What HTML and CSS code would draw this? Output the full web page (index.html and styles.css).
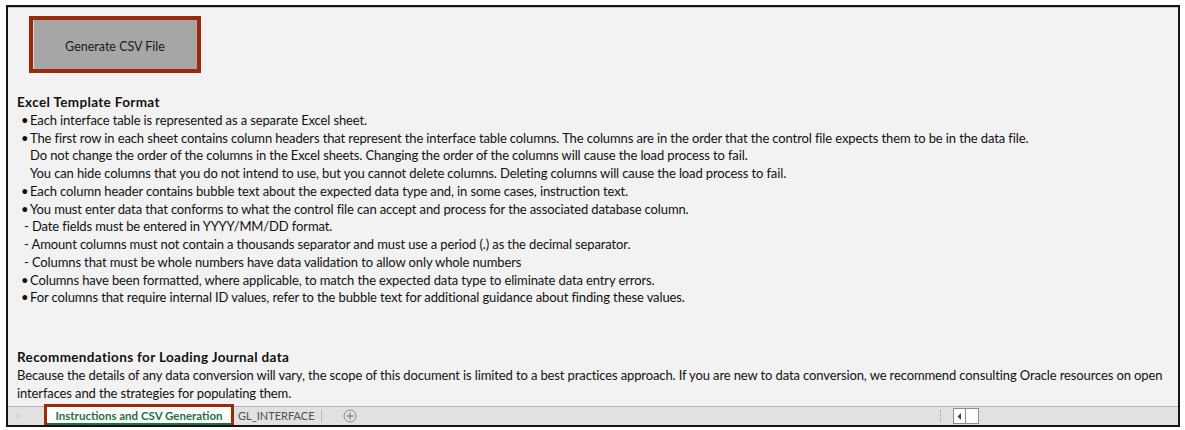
FILE: index.html
```html
<!DOCTYPE html>
<html>
<head>
<meta charset="utf-8">
<link rel="stylesheet" href="styles.css">
</head>
<body>
<div class="sheet">
  <div class="content">
    <div class="btn-wrap"><div class="btn">Generate CSV File</div></div>
    <div class="text">
      <div class="line bold">Excel Template Format</div>
      <div class="line blt"><span class="dot">•</span>Each interface table is represented as a separate Excel sheet.</div>
      <div class="line blt"><span class="dot">•</span>The first row in each sheet contains column headers that represent the interface table columns. The columns are in the order that the control file expects them to be in the data file.</div>
      <div class="line ind">Do not change the order of the columns in the Excel sheets. Changing the order of the columns will cause the load process to fail.</div>
      <div class="line ind">You can hide columns that you do not intend to use, but you cannot delete columns. Deleting columns will cause the load process to fail.</div>
      <div class="line blt"><span class="dot">•</span>Each column header contains bubble text about the expected data type and, in some cases, instruction text.</div>
      <div class="line blt"><span class="dot">•</span>You must enter data that conforms to what the control file can accept and process for the associated database column.</div>
      <div class="line dash">- Date fields must be entered in YYYY/MM/DD format.</div>
      <div class="line dash">- Amount columns must not contain a thousands separator and must use a period (.) as the decimal separator.</div>
      <div class="line dash">- Columns that must be whole numbers have data validation to allow only whole numbers</div>
      <div class="line blt"><span class="dot">•</span>Columns have been formatted, where applicable, to match the expected data type to eliminate data entry errors.</div>
      <div class="line blt"><span class="dot">•</span>For columns that require internal ID values, refer to the bubble text for additional guidance about finding these values.</div>
      <div class="gap"></div>
      <div class="line bold">Recommendations for Loading Journal data</div>
      <div class="line">Because the details of any data conversion will vary, the scope of this document is limited to a best practices approach. If you are new to data conversion, we recommend consulting Oracle resources on open</div>
      <div class="line">interfaces and the strategies for populating them.</div>
    </div>
  </div>
  <div class="tabbar">
    <div class="nav-arrow">
      <svg width="6" height="8" viewBox="0 0 6 8"><path d="M1 0.5 L5 4 L1 7.5 Z" fill="#cfcfcf"/></svg>
    </div>
    <div class="tab active">Instructions and CSV Generation</div>
    <div class="tab">GL_INTERFACE</div>
    <div class="sep"></div>
    <div class="add">
      <svg width="14" height="14" viewBox="0 0 14 14"><circle cx="7" cy="7" r="6" fill="none" stroke="#8a8a8a" stroke-width="1"/><path d="M7 3.5 V10.5 M3.5 7 H10.5" stroke="#6f6f6f" stroke-width="1"/></svg>
    </div>
    <div class="spacer"></div>
    <div class="dots"></div>
    <div class="scroll">
      <div class="scroll-left"><svg width="5" height="7" viewBox="0 0 5 7"><path d="M4 0 L0.5 3.5 L4 7 Z" fill="#444"/></svg></div>
      <div class="scroll-thumb"></div>
    </div>
  </div>
</div>
</body>
</html>
```
FILE: styles.css
```css
html, body {
  margin: 0;
  padding: 0;
  background: #ffffff;
}

.sheet {
  margin: 5px 0 0 6px;
  width: 1170px;
  height: 418px;
  border: 2px solid #141414;
  background: #f2f2f2;
  display: flex;
  flex-direction: column;
  overflow: hidden;
}

.content {
  flex: 1;
  border-top: 1px solid #c4c4c4;
  overflow: hidden;
  font-family: Lato, "Liberation Sans", sans-serif;
  font-size: 13px;
  letter-spacing: -0.12px;
  color: #111111;
}

.btn-wrap {
  padding: 8px 0 0 21px;
}

.btn {
  width: 164px;
  height: 46px;
  padding-top: 3px;
  border: 4px solid #9a2a0c;
  background: #a6a6a6;
  box-shadow: inset 1px 0 0 #d6d6d6;
  display: flex;
  align-items: center;
  justify-content: center;
  font-size: 12.5px;
  letter-spacing: 0;
  color: #1a1a1a;
}

.text {
  padding: 21px 0 0 9px;
}

.line {
  height: 17.75px;
  line-height: 17.75px;
  white-space: nowrap;
}

.bold {
  font-weight: 700;
  font-size: 13.5px;
  letter-spacing: 0.35px;
}

.blt {
  padding-left: 4px;
}

.dot {
  display: inline-block;
  width: 9px;
}

.ind {
  padding-left: 13px;
}

.dash {
  padding-left: 7px;
}

.gap {
  height: 42px;
}

.tabbar {
  height: 18px;
  border-top: 1px solid #b4b4b4;
  background: #e1e1e1;
  display: flex;
  align-items: center;
  font-family: Lato, "Liberation Sans", sans-serif;
  font-size: 11px;
}

.nav-arrow {
  width: 39px;
  padding-left: 8px;
  box-sizing: border-box;
  display: flex;
  align-items: center;
}

.tab {
  padding: 0 7px;
  color: #505050;
  height: 18px;
  line-height: 18px;
  white-space: nowrap;
}

.tab.active {
  background: #ffffff;
  color: #1e7145;
  font-weight: 700;
  font-size: 11.5px;
  width: 184px;
  box-sizing: border-box;
  text-align: center;
  outline: 3px solid #9a2a0c;
  box-shadow: inset 0 -2px 0 #1e7145;
}

.sep {
  width: 1px;
  height: 12px;
  background: #b8b8b8;
}

.add {
  margin-left: 21px;
  display: flex;
  align-items: center;
}

.spacer {
  flex: 1;
}

.dots {
  width: 1px;
  height: 12px;
  border-left: 1px dotted #9a9a9a;
}

.scroll {
  margin: 0 199px 0 11px;
  width: 24px;
  height: 14px;
  border: 1px solid #8d8d8d;
  background: #ffffff;
  display: flex;
}

.scroll-left {
  width: 11px;
  border-right: 1px solid #8d8d8d;
  display: flex;
  align-items: center;
  justify-content: center;
}

.scroll-thumb {
  flex: 1;
}
```
